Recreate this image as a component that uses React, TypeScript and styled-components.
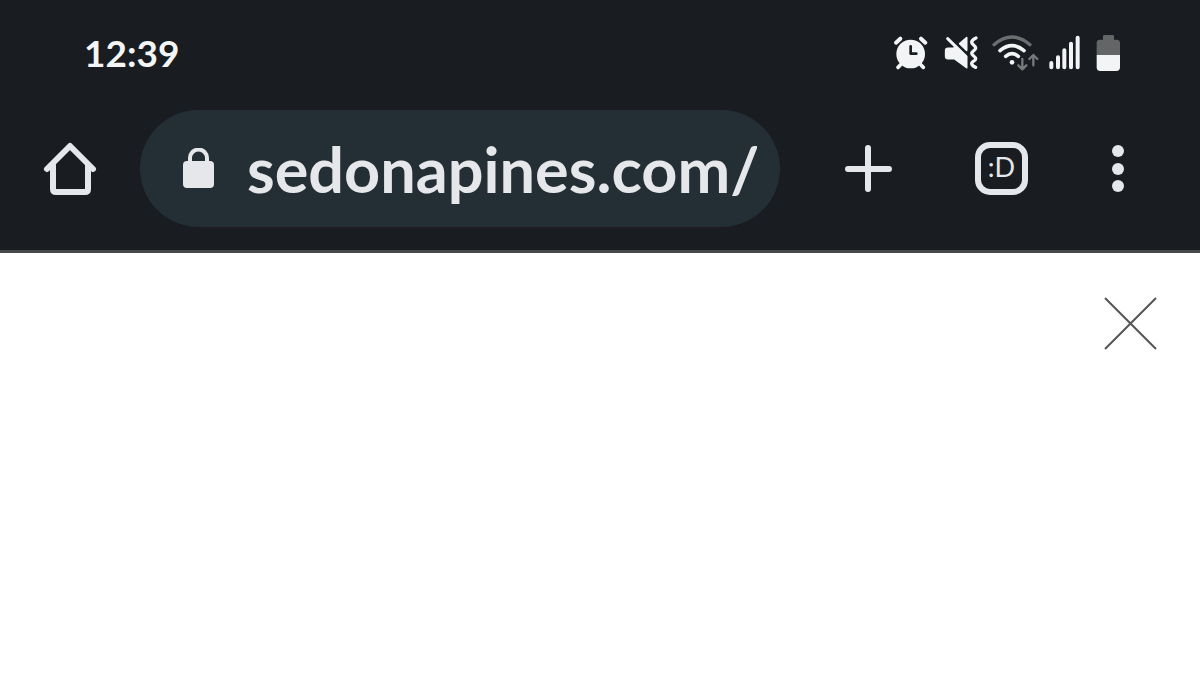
import React, { useState } from "react";
import styled, { createGlobalStyle } from "styled-components";

const GlobalStyle = createGlobalStyle`
  *, *::before, *::after { box-sizing: border-box; }
  body { margin: 0; background: #ffffff; font-family: Lato, "Open Sans", sans-serif; }
`;

const Header = styled.header`
  background: #191c20;
  color: #e5e7eb;
  border-bottom: 3px solid #48494b;
`;

const StatusBar = styled.div`
  display: flex;
  align-items: center;
  justify-content: space-between;
  height: 105px;
  padding: 0 79px 0 84px;
`;

const Clock = styled.time`
  color: #f3f4f5;
  font-size: 37px;
  line-height: 40px;
  font-weight: 700;
`;

const StatusIcons = styled.div`
  display: flex;
  align-items: center;
  gap: 8px;
`;

const StatusIcon = styled.svg<{ $width: number }>`
  display: block;
  width: ${({ $width }) => $width}px;
  height: 37px;
  fill: none;
  stroke: #f3f4f5;
  stroke-linecap: round;
  stroke-linejoin: round;
`;

const Toolbar = styled.nav`
  display: flex;
  align-items: center;
  padding: 5px 54px 23px 42px;
`;

const Actions = styled.div`
  display: flex;
  align-items: center;
  gap: 60px;
`;

const IconButton = styled.button<{ $wide?: boolean }>`
  display: flex;
  justify-content: ${({ $wide }) => ($wide ? "flex-end" : "center")};
  width: ${({ $wide }) => ($wide ? 74 : 56)}px;
  padding: 0;
  border: 0;
  background: transparent;
  color: inherit;
  cursor: pointer;
`;

const ToolIcon = styled.svg`
  display: block;
  width: 56px;
  height: 56px;
  flex: none;
  fill: none;
  stroke: currentColor;
  stroke-width: 6;
  stroke-linecap: round;
  stroke-linejoin: round;
`;

const AddressBar = styled.label`
  display: flex;
  align-items: center;
  flex: 1;
  min-width: 0;
  height: 117px;
  margin: 0 60px 0 42px;
  padding: 0 23px 0 42px;
  border-radius: 59px;
  background: #242f35;
`;

const LockIcon = styled.svg`
  display: block;
  flex: none;
  width: 33px;
  height: 42px;
  margin-right: 32px;
`;

const UrlInput = styled.input`
  flex: 1;
  min-width: 0;
  height: 80px;
  padding: 0;
  border: 0;
  outline: 0;
  background: transparent;
  color: #e5e7eb;
  font-family: inherit;
  font-size: 63px;
  font-weight: 700;
  line-height: 80px;
`;

const TabCount = styled.span`
  display: flex;
  align-items: center;
  justify-content: center;
  width: 53px;
  height: 53px;
  margin-right: 2px;
  border: 6px solid currentColor;
  border-radius: 15px;
  font-family: Lato, sans-serif;
  font-size: 27px;
  line-height: 30px;
  padding-bottom: 4px;
`;

const Page = styled.main`
  display: flex;
  justify-content: flex-end;
  align-items: flex-start;
  padding: 43px 41px;
`;

const CloseIcon = styled.svg`
  display: block;
  width: 56px;
  height: 56px;
  flex: none;
  fill: none;
  stroke: #555555;
  stroke-width: 2;
`;

export default function App() {
  const [url, setUrl] = useState("sedonapines.com/");

  return (
    <>
      <GlobalStyle />
      <Header>
        <StatusBar>
          <Clock dateTime="12:39">12:39</Clock>
          <StatusIcons>
            <StatusIcon $width={43} viewBox="36 42 129 111" aria-label="Alarm set">
              <circle cx="92" cy="102" r="43" fill="#f3f4f5" stroke="none" />
              <path d="M48 68 61 56M136 68 123 56" strokeWidth="12" />
              <path d="M64 132 54 142M120 132 130 142" strokeWidth="11" />
              <path d="M92 79v22h17" stroke="#191c20" strokeWidth="8" />
            </StatusIcon>
            <StatusIcon $width={41} viewBox="189 42 123 111" aria-label="Vibrate">
              <path
                d="M203 56 260 112v31l-37-27h-19q-7 0-7-7V92q0-7 7-7h16l8-4zM239 71l21-18v38z"
                fill="#f3f4f5"
                strokeWidth="5"
              />
              <path d="M203 56 258 110" strokeWidth="9" />
              <path
                d="M288 54q-13 6-13 13c0 7 12 9 12 17s-12 9-12 16 12 9 12 16-12 8-12 14 4 9 12 12"
                strokeWidth="10"
              />
            </StatusIcon>
            <StatusIcon $width={47} viewBox="36 42 141 111" aria-label="Wi-Fi">
              <path d="M42 74Q96 28 150 74" stroke="#6c6e70" strokeWidth="10" />
              <path d="M60 92Q96 62 132 92" strokeWidth="11" />
              <path d="M77 109Q96 93 115 109" strokeWidth="11" />
              <circle cx="96" cy="127" r="7" fill="#f3f4f5" stroke="none" />
              <path
                d="M127 117v30M115 136l12 12 12-12M160 136v-30M148 117l12-12 12 12"
                stroke="#77797b"
                strokeWidth="7"
              />
            </StatusIcon>
            <StatusIcon $width={40} viewBox="201 42 120 111" aria-label="Signal strength">
              <path
                d="M214 129v13M234 112v30M253 91v51M273 71v71M293 53v89"
                strokeWidth="12"
              />
            </StatusIcon>
            <StatusIcon $width={26} viewBox="345 42 78 111" aria-label="Battery half full">
              <path
                d="M350 105V69q0-10 10-10h9V49q0-4 4-4h25q4 0 4 4v10h8q10 0 10 10v36z"
                fill="#646566"
                stroke="none"
              />
              <path d="M350 105h70v37q0 11-11 11h-48q-11 0-11-11z" fill="#f3f4f5" stroke="none" />
            </StatusIcon>
          </StatusIcons>
        </StatusBar>
        <Toolbar aria-label="Browser">
          <IconButton aria-label="Home">
            <ToolIcon viewBox="0 1 56 56">
              <path d="M5 29 28 6 51 29M11 25v24q0 3 3 3h29q3 0 3-3V25" />
            </ToolIcon>
          </IconButton>
          <AddressBar>
            <LockIcon viewBox="0 1 33 42" aria-hidden="true">
              <path d="M8 16v-5a8 8 0 0 1 17 0V16" fill="none" stroke="#e5e7eb" strokeWidth="4" />
              <rect x="1" y="14" width="31" height="27" rx="4" fill="#e5e7eb" />
            </LockIcon>
            <UrlInput
              type="text"
              aria-label="Address"
              spellCheck={false}
              value={url}
              onChange={(e) => setUrl(e.target.value)}
            />
          </AddressBar>
          <Actions>
            <IconButton aria-label="New tab">
              <ToolIcon viewBox="0 1 56 56">
                <path d="M28 8v41M8 29h41" />
              </ToolIcon>
            </IconButton>
            <IconButton $wide aria-label="Open tabs">
              <TabCount>:D</TabCount>
            </IconButton>
            <IconButton aria-label="More options">
              <ToolIcon viewBox="0 1 56 56">
                <g fill="currentColor" stroke="none">
                  <circle cx="28" cy="11" r="6" />
                  <circle cx="28" cy="29" r="6" />
                  <circle cx="28" cy="46" r="6" />
                </g>
              </ToolIcon>
            </IconButton>
          </Actions>
        </Toolbar>
      </Header>
      <Page>
        <IconButton aria-label="Close">
          <CloseIcon viewBox="0 0 56 56">
            <path d="M2 2 53 53M53 2 2 53" />
          </CloseIcon>
        </IconButton>
      </Page>
    </>
  );
}
